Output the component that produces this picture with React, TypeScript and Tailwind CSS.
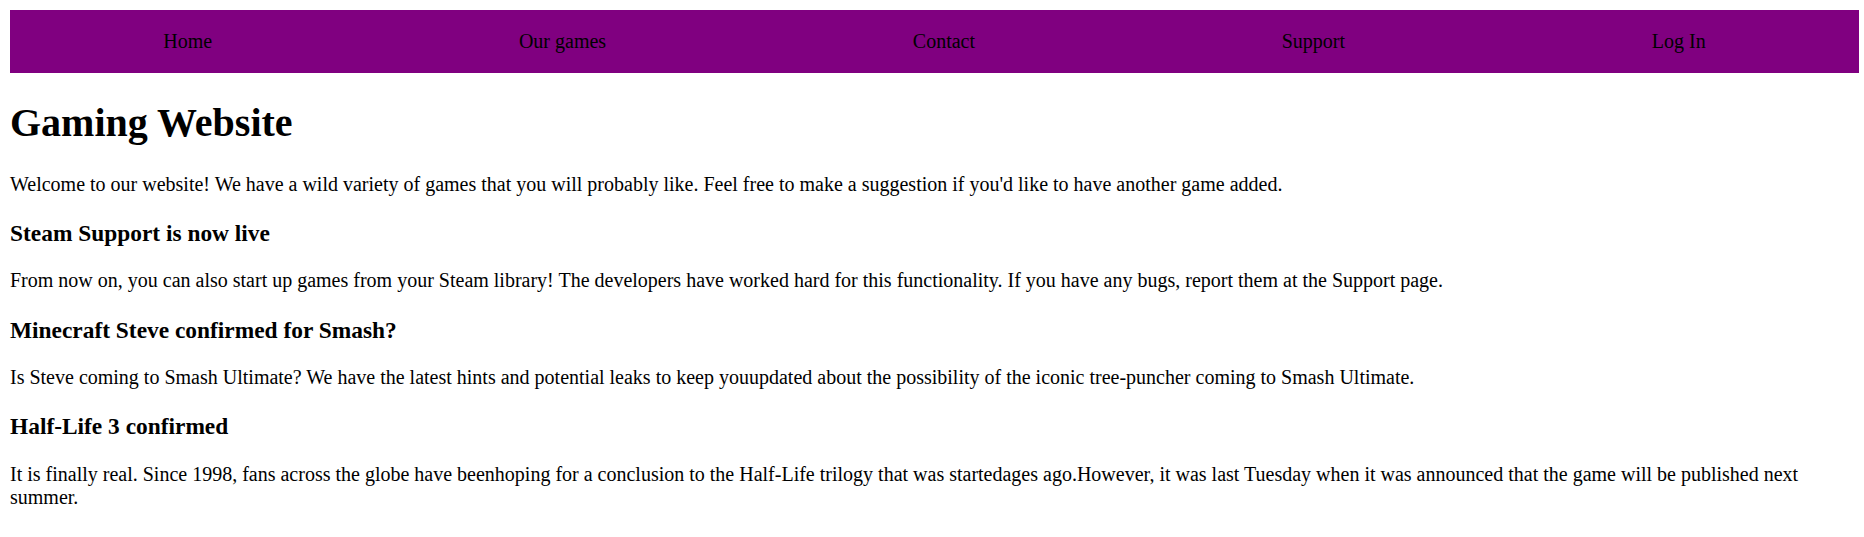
import React from "react";

const links = ["Home", "Our games", "Contact", "Support", "Log In"];

const posts = [
  {
    title: "Steam Support is now live",
    body: "From now on, you can also start up games from your Steam library! The developers have worked hard for this functionality. If you have any bugs, report them at the Support page.",
  },
  {
    title: "Minecraft Steve confirmed for Smash?",
    body: "Is Steve coming to Smash Ultimate? We have the latest hints and potential leaks to keep youupdated about the possibility of the iconic tree-puncher coming to Smash Ultimate.",
  },
  {
    title: "Half-Life 3 confirmed",
    body: "It is finally real. Since 1998, fans across the globe have beenhoping for a conclusion to the Half-Life trilogy that was startedages ago.However, it was last Tuesday when it was announced that the game will be published next summer.",
  },
];

export default function App() {
  return (
    <div className="min-h-[537px] bg-white p-[10px] text-black font-['Liberation_Serif','Times_New_Roman',serif]">
      <nav className="mr-[-5px] flex justify-around bg-[#800080] py-[20px] text-[20px] leading-[23px]">
        {links.map((link) => (
          <a key={link} href="#">
            {link}
          </a>
        ))}
      </nav>

      <h1 className="my-[26.8px] text-[40px] font-bold leading-[46px]">Gaming Website</h1>
      <p className="my-[20px] text-[20px] leading-[23px]">
        Welcome to our website! We have a wild variety of games that you will probably like. Feel free to make a
        suggestion if you'd like to have another game added.
      </p>

      {posts.map((post) => (
        <div key={post.title}>
          <h3 className="mt-[23.4px] mb-[21.4px] text-[23.4px] font-bold leading-[28.9px]">{post.title}</h3>
          <p className="my-[20px] text-[20px] leading-[23px]">{post.body}</p>
        </div>
      ))}
    </div>
  );
}
